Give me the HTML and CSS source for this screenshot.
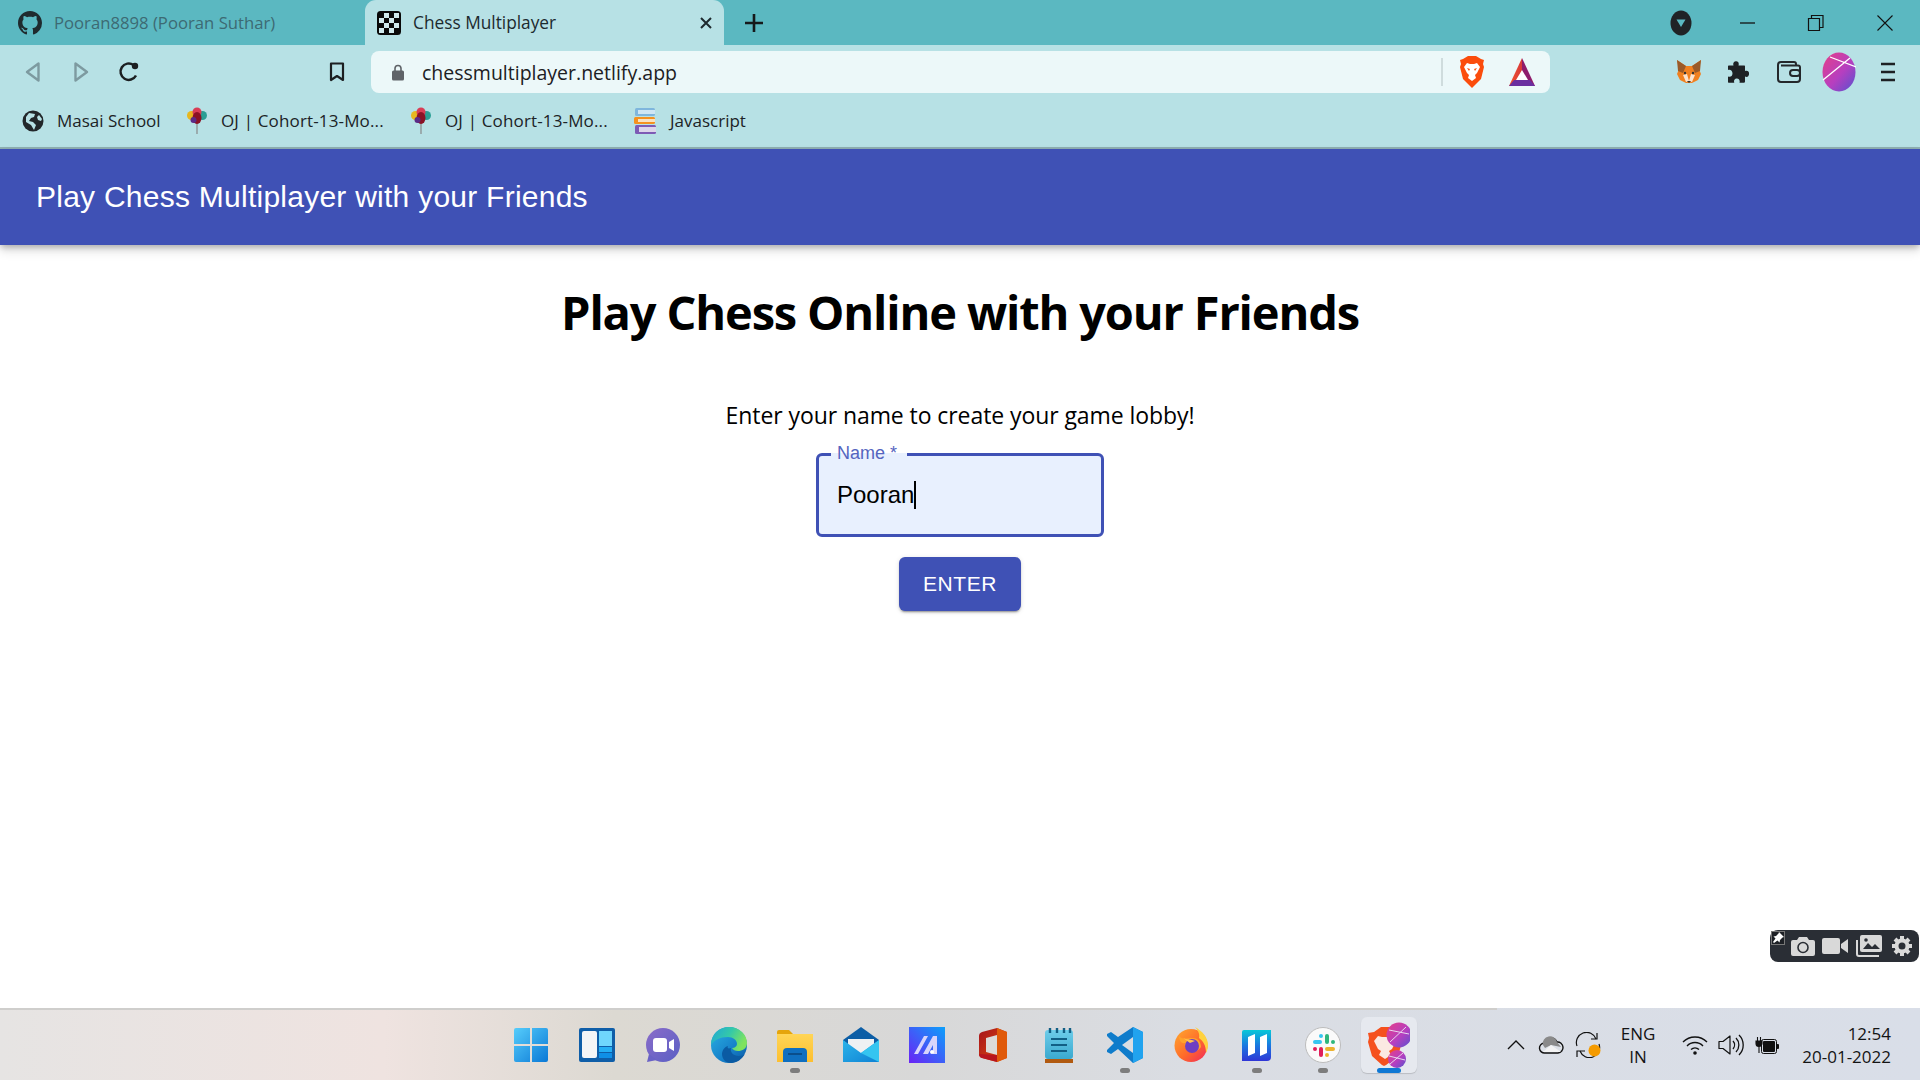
FILE: index.html
```html
<!DOCTYPE html>
<html lang="en">
<head>
<meta charset="utf-8">
<title>Chess Multiplayer</title>
<link rel="stylesheet" href="styles.css">
</head>
<body>
<svg class="defs" width="0" height="0" aria-hidden="true">
  <defs>
    <linearGradient id="gWin" x1="0" y1="0" x2="1" y2="1"><stop offset="0" stop-color="#56cdfb"/><stop offset="1" stop-color="#0a78d6"/></linearGradient>
    <linearGradient id="gEdge" x1="0" y1="0" x2="1" y2="1"><stop offset="0" stop-color="#2bb2e4"/><stop offset=".6" stop-color="#1680c9"/><stop offset="1" stop-color="#0c59a4"/></linearGradient>
    <linearGradient id="gEdgeTop" x1="0" y1="0" x2="1" y2=".4"><stop offset="0" stop-color="#1fa6d8"/><stop offset=".55" stop-color="#34c9a8"/><stop offset="1" stop-color="#7fe35f"/></linearGradient>
    <linearGradient id="gFolder" x1="0" y1="0" x2="0" y2="1"><stop offset="0" stop-color="#ffd556"/><stop offset="1" stop-color="#fdbf2f"/></linearGradient>
    <linearGradient id="gMail" x1="0" y1="0" x2="1" y2="1"><stop offset="0" stop-color="#2cb4ea"/><stop offset="1" stop-color="#0f82d4"/></linearGradient>
    <linearGradient id="gMark" x1="1" y1="0" x2="0" y2="1"><stop offset="0" stop-color="#0ca0fb"/><stop offset="1" stop-color="#6b22f5"/></linearGradient>
    <linearGradient id="gOffice" x1="0" y1="0" x2="1" y2="1"><stop offset="0" stop-color="#a5121c"/><stop offset="1" stop-color="#e2500c"/></linearGradient>
    <linearGradient id="gNote" x1="0" y1="0" x2="0" y2="1"><stop offset="0" stop-color="#6ecdea"/><stop offset="1" stop-color="#3aa9cf"/></linearGradient>
    <linearGradient id="gDove" x1="0" y1="0" x2="0" y2="1"><stop offset="0" stop-color="#08c8d8"/><stop offset=".5" stop-color="#1a78e0"/><stop offset="1" stop-color="#2f36d6"/></linearGradient>
    <linearGradient id="gFire" x1="0" y1="0" x2="1" y2="1"><stop offset="0" stop-color="#ffa92f"/><stop offset=".55" stop-color="#ff6a2a"/><stop offset="1" stop-color="#f0255f"/></linearGradient>
    <linearGradient id="gAvatar" x1="0" y1="0" x2="1" y2="1"><stop offset="0" stop-color="#e63f87"/><stop offset=".55" stop-color="#b63fc0"/><stop offset="1" stop-color="#5552cf"/></linearGradient>
    <linearGradient id="gBat" x1="0" y1="0" x2="1" y2="0"><stop offset="0" stop-color="#f2532c"/><stop offset="1" stop-color="#d73a3a"/></linearGradient>
    <linearGradient id="gChat" x1="0" y1="0" x2="1" y2="1"><stop offset="0" stop-color="#8a6cc9"/><stop offset="1" stop-color="#5a5fc4"/></linearGradient>
  </defs>
</svg>

<div class="tabstrip">
  <div class="tab tab-inactive">
    <svg class="tab-fav" width="24" height="24" viewBox="0 0 16 16"><path fill="#1f2a2e" d="M8 0C3.58 0 0 3.58 0 8c0 3.54 2.29 6.53 5.47 7.59.4.07.55-.17.55-.38 0-.19-.01-.82-.01-1.49-2.01.37-2.53-.49-2.69-.94-.09-.23-.48-.94-.82-1.13-.28-.15-.68-.52-.01-.53.63-.01 1.08.58 1.23.82.72 1.21 1.87.87 2.33.66.07-.52.28-.87.51-1.07-1.78-.2-3.64-.89-3.64-3.95 0-.87.31-1.59.82-2.15-.08-.2-.36-1.02.08-2.12 0 0 .67-.21 2.2.82.64-.18 1.32-.27 2-.27.68 0 1.36.09 2 .27 1.53-1.04 2.2-.82 2.2-.82.44 1.1.16 1.92.08 2.12.51.56.82 1.27.82 2.15 0 3.07-1.87 3.75-3.65 3.95.29.25.54.73.54 1.48 0 1.07-.01 1.93-.01 2.2 0 .21.15.46.55.38A8.013 8.013 0 0016 8c0-4.42-3.58-8-8-8z"/></svg>
    <span class="tab-title">Pooran8898 (Pooran Suthar)</span>
  </div>
  <div class="tab tab-active">
    <svg class="tab-fav" width="24" height="24" viewBox="0 0 24 24"><rect width="24" height="24" rx="3.500" fill="#0a0a0a"/><g fill="#d0e9ec"><rect x="7" y="2" width="5" height="5"/><rect x="17" y="2" width="5" height="5"/><rect x="2" y="7" width="5" height="5"/><rect x="12" y="7" width="5" height="5"/><rect x="7" y="12" width="5" height="5"/><rect x="17" y="12" width="5" height="5"/><rect x="2" y="17" width="5" height="5"/><rect x="12" y="17" width="5" height="5"/></g></svg>
    <span class="tab-title">Chess Multiplayer</span>
    <svg class="tab-close" width="14" height="14" viewBox="0 0 14 14"><path d="M2 2l10 10M12 2L2 12" stroke="#1e2a2e" stroke-width="2" fill="none"/></svg>
  </div>
  <svg class="new-tab" width="20" height="20" viewBox="0 0 20 20"><path d="M10 1v18M1 10h18" stroke="#15191b" stroke-width="2.600"/></svg>
  <div class="window-controls">
    <svg width="22" height="26" viewBox="0 0 22 26"><ellipse cx="11" cy="13" rx="10.500" ry="12.500" fill="#202326"/><path d="M6.500 9.500h9L11 17z" fill="#5bb8c1"/></svg>
    <svg width="18" height="18" viewBox="0 0 18 18"><path d="M1 9h15" stroke="#111" stroke-width="1.300"/></svg>
    <svg width="18" height="20" viewBox="0 0 18 20"><path d="M1.500 5.500h11v12h-11z M4.500 5V2.500h11.500v12h-3.500" fill="none" stroke="#111" stroke-width="1.200"/></svg>
    <svg width="18" height="18" viewBox="0 0 18 18"><path d="M1.500 1.500l15 15M16.500 1.500l-15 15" stroke="#111" stroke-width="1.100"/></svg>
  </div>
</div>

<div class="toolbar">
  <div class="nav-group">
    <svg width="18" height="22" viewBox="0 0 18 22"><path d="M14.500 2.500v17L3 11z" fill="none" stroke="#7d9aa0" stroke-width="2.400" stroke-linejoin="round"/></svg>
    <svg width="18" height="22" viewBox="0 0 18 22"><path d="M3.500 2.500v17L15 11z" fill="none" stroke="#7d9aa0" stroke-width="2.400" stroke-linejoin="round"/></svg>
    <svg width="22" height="22" viewBox="0 0 22 22"><path d="M18 14.500A8.200 8.200 0 1 1 15.500 4" fill="none" stroke="#1c1f21" stroke-width="2.500"/><circle cx="17" cy="5" r="3.200" fill="#1c1f21"/></svg>
  </div>
  <svg class="bookmark-btn" width="16" height="20" viewBox="0 0 16 20"><path d="M2 1.500h12v16.500l-6-4-6 4z" fill="none" stroke="#1c1f21" stroke-width="2.200" stroke-linejoin="round"/></svg>
  <div class="omnibox">
    <svg class="lock" width="14" height="17" viewBox="0 0 14 17"><path d="M4 7V4.500a3 3 0 0 1 6 0V7" fill="none" stroke="#5f6368" stroke-width="1.600"/><rect x="1" y="6.500" width="12" height="10" rx="1.500" fill="#5f6368"/></svg>
    <span class="url">chessmultiplayer.netlify.app</span>
    <span class="omni-sep"></span>
    <svg class="brave-shield" width="26" height="34" viewBox="0 0 26 34"><path d="M4 4l5-3h8l5 3 3 1-1 4 1 3-3 12-8 8-1 1-1-1-8-8L1 12l1-3-1-4z" fill="#fb4c0c"/><path d="M8 8l3 1h4l3-1 3 4-3 6-2 2 1 3-4 3-4-3 1-3-2-2-3-6z" fill="#fff"/><path d="M8 13l3 1-1 2zM18 13l-3 1 1 2z" fill="#fb4c0c"/></svg>
    <svg class="bat" width="28" height="30" viewBox="0 0 28 30"><path d="M14 1L1 29h13z" fill="url(#gBat)"/><path d="M14 1L27 29H14z" fill="#8f1c6b"/><path d="M1 29l5-6h16l5 6z" fill="#6a2fa0"/><path d="M14 13l6 10H8z" fill="#fff"/></svg>
  </div>
  <div class="extensions">
    <svg width="26" height="26" viewBox="0 0 26 26"><path d="M1 1l9 6h6l9-6-2 9 2 5-3 6-6 3h-6l-6-3-3-6 2-5z" fill="#f0801f"/><path d="M1 1l9 6-3 7-5-2zM25 1l-9 6 3 7 5-2z" fill="#9a5a28"/><path d="M7 16l4-1 2 7-3 1zM19 16l-4-1-2 7 3 1z" fill="#fbe3cf"/><path d="M11 22h4l-2 2z" fill="#333"/><circle cx="9" cy="14" r="1.200" fill="#333"/><circle cx="17" cy="14" r="1.200" fill="#333"/></svg>
    <svg width="22" height="24" viewBox="0 0 22 24"><path d="M8 1.500c2.500-1 4.500 1 3.500 4H17c.8 0 1 .4 1 1V11c3-1 4.500 1 4 3.500-.5 2.500-2.500 3-4 2v5c0 .8-.4 1.200-1 1.200h-4.500c.8-3-1-4.500-3-4.200-2 .3-3 2-2.200 4.200H2c-.8 0-1-.5-1-1v-5.200c2.500 1 4.500-.5 4.500-3S3.500 9 1 10V6.500c0-.8.4-1 1-1h4.500C5.800 3.500 6.500 2 8 1.500z" fill="#1e2124"/></svg>
    <svg width="24" height="22" viewBox="0 0 24 22"><path d="M19 4.500V3a2 2 0 0 0-2-2H4a3 3 0 0 0-3 3v14a3 3 0 0 0 3 3h16a3 3 0 0 0 3-3V6.500a2 2 0 0 0-2-2H4" fill="none" stroke="#24282b" stroke-width="2"/><rect x="13" y="9" width="10" height="6" rx="3" fill="#b7e1e5" stroke="#24282b" stroke-width="2"/></svg>
    <svg width="34" height="40" viewBox="0 0 34 40"><ellipse cx="17" cy="20" rx="16.500" ry="19.500" fill="url(#gAvatar)"/><path d="M8 5l26 10M1 28L28 6" stroke="#fff" stroke-width="1.300" fill="none"/></svg>
    <svg width="14" height="24" viewBox="0 0 14 24"><path d="M0 4h14M0 12h14M0 20h14" stroke="#1e2124" stroke-width="2.400"/></svg>
  </div>
</div>

<div class="bookmarks">
  <div class="bm bm-masai">
    <svg width="22" height="22" viewBox="0 0 22 22"><circle cx="11" cy="11" r="10.500" fill="#22272a"/><path d="M7 3l6 1-1 3-3 1-2 3 4 1 3 3-2 5-3-5-5-3V7zM17 5l3 4-1 2-3-1-1-3z" fill="#b7e1e5"/></svg>
    <span>Masai School</span>
  </div>
  <div class="bm bm-oj">
    <svg width="22" height="28" viewBox="0 0 22 28"><path d="M11 14v13" stroke="#888" stroke-width="1.200"/><circle cx="5.500" cy="8.500" r="4.500" fill="#e7b71f"/><circle cx="16.500" cy="8.500" r="4.500" fill="#2a9e94"/><circle cx="11" cy="5" r="4.500" fill="#d93d55"/><ellipse cx="11" cy="11" rx="4.500" ry="6" fill="#8a1225"/><circle cx="7.500" cy="13" r="3" fill="#5b2a86"/></svg>
    <span>OJ | Cohort-13-Mo...</span>
  </div>
  <div class="bm bm-oj">
    <svg width="22" height="28" viewBox="0 0 22 28"><path d="M11 14v13" stroke="#888" stroke-width="1.200"/><circle cx="5.500" cy="8.500" r="4.500" fill="#e7b71f"/><circle cx="16.500" cy="8.500" r="4.500" fill="#2a9e94"/><circle cx="11" cy="5" r="4.500" fill="#d93d55"/><ellipse cx="11" cy="11" rx="4.500" ry="6" fill="#8a1225"/><circle cx="7.500" cy="13" r="3" fill="#5b2a86"/></svg>
    <span>OJ | Cohort-13-Mo...</span>
  </div>
  <div class="bm bm-js">
    <svg width="24" height="28" viewBox="0 0 24 28"><rect x="2" y="1" width="20" height="8" rx="1.500" fill="#7fb6dd"/><rect x="5" y="3" width="17" height="4" fill="#cfe6f4"/><rect x="1" y="10" width="21" height="7" rx="1.500" fill="#f5911e"/><rect x="5" y="12" width="17" height="3" fill="#f9e2c2"/><rect x="2" y="18" width="21" height="9" rx="1.500" fill="#7d5bb5"/><rect x="6" y="20" width="17" height="5" fill="#dcd6ea"/></svg>
    <span>Javascript</span>
  </div>
</div>

<header class="appbar">
  <span class="appbar-title">Play Chess Multiplayer with your Friends</span>
</header>

<main class="page">
  <h1 class="headline">Play Chess Online with your Friends</h1>
  <p class="prompt">Enter your name to create your game lobby!</p>
  <div class="field">
    <span class="field-label">Name *</span>
    <span class="field-value">Pooran</span><span class="caret"></span>
  </div>
  <button class="enter" type="button">ENTER</button>

  <div class="capture">
    <div class="capture-pin"><svg width="12" height="12" viewBox="0 0 12 12"><path d="M7 0l5 5-1.500 .5-2.500 2.500-.5 2.500-2-2L2 11 1 10l2.500-3.500-2-2L4 4l2.500-2.500z" fill="#fff"/></svg></div>
    <svg width="24" height="20" viewBox="0 0 24 20"><path d="M8 1h8l2 3h4a2 2 0 0 1 2 2v12a2 2 0 0 1-2 2H2a2 2 0 0 1-2-2V6a2 2 0 0 1 2-2h4z" fill="#d9d9d9"/><circle cx="12" cy="11.500" r="5" fill="#d9d9d9" stroke="#2a2e35" stroke-width="1.600"/></svg>
    <svg width="26" height="18" viewBox="0 0 26 18"><rect y="1" width="18" height="16" rx="2" fill="#d9d9d9"/><path d="M19 7l7-5v14l-7-5z" fill="#d9d9d9"/></svg>
    <svg width="26" height="22" viewBox="0 0 26 22"><rect x="4" y="0" width="22" height="17" rx="2" fill="#d9d9d9"/><path d="M7 14l5-6 4 4 3-3 5 5z" fill="#2a2e35"/><circle cx="10" cy="5" r="1.800" fill="#2a2e35"/><path d="M1 5v14a2 2 0 0 0 2 2h20" fill="none" stroke="#d9d9d9" stroke-width="2"/></svg>
    <svg width="22" height="22" viewBox="0 0 22 22"><circle cx="11" cy="11" r="5.500" fill="none" stroke="#d9d9d9" stroke-width="4"/><path d="M11 1v4M11 17v4M1 11h4M17 11h4M4 4l3 3M15 15l3 3M18 4l-3 3M7 15l-3 3" stroke="#d9d9d9" stroke-width="4"/></svg>
  </div>
</main>

<footer class="taskbar">
  <span class="taskbar-spacer"></span>
  <div class="task-icons">
    <div class="task"><svg width="36" height="36" viewBox="0 0 36 36"><g fill="url(#gWin)"><path d="M1 3a2 2 0 0 1 2-2h14v16H1zM19 1h14a2 2 0 0 1 2 2v14H19zM1 19h16v16H3a2 2 0 0 1-2-2zM19 19h16v14a2 2 0 0 1-2 2H19z"/></g></svg></div>
    <div class="task"><svg width="36" height="36" viewBox="0 0 36 36"><rect y="1" width="36" height="34" rx="2" fill="#0f5ea8"/><rect x="3" y="4" width="15" height="27" rx="2" fill="#f4f5f6"/><rect x="20" y="4" width="13" height="15" fill="#6fd6fd"/><rect x="20" y="20" width="13" height="5" fill="#24aef4"/><rect x="20" y="26" width="13" height="5" fill="#0f8fe6"/></svg></div>
    <div class="task"><svg width="36" height="36" viewBox="0 0 36 36"><circle cx="18" cy="18" r="17" fill="url(#gChat)"/><path d="M4 27l-2 8 10-2z" fill="#6a62c6"/><rect x="8" y="11" width="14" height="14" rx="3" fill="#fff"/><path d="M24 15l5-3v12l-5-3z" fill="#fff"/></svg></div>
    <div class="task"><svg width="36" height="36" viewBox="0 0 36 36"><circle cx="18" cy="18" r="18" fill="url(#gEdge)"/><path d="M0 18C0 6 9 0 18 0c10 0 18 7 18 16 0 6-5 8-9 8-3 0-5-1-6-3 3 0 5-2 5-4 0-4-4-7-9-7C9 10 3 13 0 18z" fill="url(#gEdgeTop)"/><path d="M20 21c-1 4 2 8 8 8 3 0 5-1 6-2-3 5-8 9-14 9-5 0-9-4-9-9 0-3 2-7 6-8-1 2 0 3 3 2z" fill="#0b5ba3"/></svg></div>
    <div class="task"><svg width="36" height="36" viewBox="0 0 36 36"><path d="M0 5a2 2 0 0 1 2-2h10l4 4h18a2 2 0 0 1 2 2v4H0z" fill="#e5a50c"/><path d="M0 7h36v28H0z" fill="url(#gFolder)"/><path d="M6 35V25a4 4 0 0 1 4-4h16a4 4 0 0 1 4 4v10z" fill="#0f6fc0"/><rect x="11" y="26" width="14" height="2" fill="#0a4e8c"/></svg><span class="run-dot"></span></div>
    <div class="task"><svg width="36" height="36" viewBox="0 0 36 36"><path d="M0 13L18 0l18 13v22H0z" fill="#0c5ea6"/><path d="M5 12h26v10l-13 9L5 22z" fill="#eef1f3"/><path d="M0 13l18 13 18-13v22H0z" fill="url(#gMail)"/><path d="M36 13v22L18 26z" fill="#35c5f0"/></svg></div>
    <div class="task"><svg width="36" height="36" viewBox="0 0 36 36"><rect width="36" height="36" fill="url(#gMark)"/><path d="M5 27L15 9h4L9 27zM14 27L24 9h4v18h-4v-9l-5 9z" fill="#d8d4fb"/><circle cx="23" cy="25" r="2" fill="#fff"/></svg></div>
    <div class="task"><svg width="36" height="36" viewBox="0 0 36 36"><path d="M4 9Q4 6 7 5L22 1l10 4v26l-10 4L7 31q-3-1-3-4z" fill="url(#gOffice)"/><path d="M22 8l-11 3v14l11 3z" fill="#dcdbd9"/><path d="M22 1l10 4v26l-10 4z" fill="#e05a0a"/><path d="M4 27q0 3 3 4l15 4v-7z" fill="#b8161f"/></svg></div>
    <div class="task"><svg width="36" height="36" viewBox="0 0 36 36"><rect x="4" y="32" width="28" height="4" fill="#b15a10"/><rect x="4" y="3" width="28" height="29" rx="3" fill="url(#gNote)"/><path d="M9 1v5M16 1v5M23 1v5M29 1v5" stroke="#125f85" stroke-width="2.400"/><path d="M10 12h16M10 18h16M10 24h16" stroke="#125f85" stroke-width="1.800"/></svg></div>
    <div class="task"><svg width="36" height="36" viewBox="0 0 36 36"><path d="M26 0l10 5v26l-10 5-15-14-7 5-4-2v-2l7-7-7-7v-2l4-2 7 5z" fill="#0f7ccb"/><path d="M26 0l10 5v26l-10 5z" fill="#21a3ef"/><path d="M26 10L15 18l11 8z" fill="#dadde2"/></svg><span class="run-dot"></span></div>
    <div class="task"><svg width="36" height="36" viewBox="0 0 36 36"><circle cx="18" cy="18.500" r="16.500" fill="url(#gFire)"/><path d="M22 0c7 4 13 10 13 18 0 3-1 6-2 8 0-8-3-12-7-15 1-4-1-8-4-11z" fill="#ffd23f"/><path d="M6 9c3 4 9 2 13 2 7 0 9 5 9 9-3 5-9 6-13 3-3-2-4-5-3-7-4 1-6-3-6-7z" fill="#ffa32b"/><circle cx="19" cy="19" r="7" fill="#6d3ec2"/><path d="M10 11c3 2 8 1 12 3l-5 2z" fill="#ffc14d"/></svg></div>
    <div class="task"><svg width="36" height="36" viewBox="0 0 36 36"><path d="M5 3h27v27a4 4 0 0 1-4 4H3V5a2 2 0 0 1 2-2z" fill="url(#gDove)"/><path d="M9 10l7-3v19l-7 3zM21 10l7-3v19l-7 3z" fill="#fff"/></svg><span class="run-dot"></span></div>
    <div class="task"><svg width="36" height="36" viewBox="0 0 36 36"><circle cx="18" cy="18" r="17.500" fill="#fafafa" stroke="#bcbcbc"/><rect x="8" y="13" width="9" height="4" rx="2" fill="#36c5f0"/><rect x="14" y="7" width="4" height="4" rx="2" fill="#36c5f0"/><rect x="20" y="7" width="4" height="10" rx="2" fill="#2eb67d"/><rect x="26" y="13" width="4" height="4" rx="2" fill="#2eb67d"/><rect x="20" y="20" width="10" height="4" rx="2" fill="#ecb22e"/><rect x="20" y="26" width="4" height="4" rx="2" fill="#ecb22e"/><rect x="14" y="20" width="4" height="10" rx="2" fill="#e01e5a"/><rect x="8" y="20" width="4" height="4" rx="2" fill="#e01e5a"/></svg><span class="run-dot"></span></div>
    <div class="task task-current"><svg width="42" height="46" viewBox="0 0 42 46"><path d="M6 10l7-5h10l7 5 4 1-1 5 1 4-4 14-12 9-2 1-2-1-10-9L0 20l1-4-1-5z" fill="#f5511e"/><path d="M10 14l4 1h6l4-1 4 5-4 8-3 2 2 4-6 4-6-4 2-4-3-2-4-8z" fill="#fbe9e2"/><circle cx="31" cy="13" r="12.500" fill="url(#gAvatar)"/><path d="M21 8l20 4M22 20L38 5" stroke="#e9d5ee" stroke-width="1"/><circle cx="29" cy="37" r="9" fill="url(#gAvatar)"/><path d="M21 34l16 4M22 42l13-11" stroke="#e9d5ee" stroke-width="1"/></svg><span class="run-bar"></span></div>
  </div>
  <div class="tray">
    <svg class="t-chevron" width="18" height="10" viewBox="0 0 18 10"><path d="M1 9l8-8 8 8" fill="none" stroke="#111" stroke-width="1.300"/></svg>
    <svg class="t-cloud" width="26" height="18" viewBox="0 0 26 18"><path d="M7 17a5 5 0 0 1-1-10 7 7 0 0 1 13-1 5.500 5.500 0 0 1 1 11z" fill="#dde1e8" stroke="#111" stroke-width="1.400"/><path d="M5 9a7 7 0 0 1 14-3l4 5-10-2-6 3z" fill="#8a8a8a"/><path d="M5 16l8-7 10 7z" fill="#f3f3f3"/></svg>
    <svg class="t-sync" width="26" height="26" viewBox="0 0 26 26"><path d="M2 14A10 10 0 0 1 21 7M24 12a10 10 0 0 1-19 7" fill="none" stroke="#111" stroke-width="1.200"/><path d="M16 7h6V1M10 19H2v6" fill="none" stroke="#111" stroke-width="1.200"/><circle cx="19.500" cy="18.500" r="6" fill="#f59b00"/></svg>
    <div class="t-lang"><span>ENG</span><span>IN</span></div>
    <svg class="t-wifi" width="26" height="20" viewBox="0 0 26 20"><path d="M1 7a17 17 0 0 1 24 0M5 11a11 11 0 0 1 16 0M9 14.500a6 6 0 0 1 8 0" fill="none" stroke="#111" stroke-width="1.400"/><circle cx="13" cy="18" r="1.800" fill="#111"/></svg>
    <svg class="t-speaker" width="26" height="22" viewBox="0 0 26 22"><path d="M1 7.500h4L12 2v18l-7-5.500H1z" fill="none" stroke="#111" stroke-width="1.200" stroke-linejoin="round"/><path d="M15 7a6 6 0 0 1 0 8M18 4a10 10 0 0 1 0 14M21 1a14 14 0 0 1 0 20" fill="none" stroke="#111" stroke-width="1.300"/></svg>
    <svg class="t-battery" width="24" height="20" viewBox="0 0 24 20"><rect x="8" y="6" width="12" height="11" rx="1" fill="#111"/><rect x="6.500" y="4.500" width="15" height="14" rx="2" fill="none" stroke="#111" stroke-width="1"/><rect x="21.500" y="9" width="2.500" height="5" rx="1" fill="#111"/><path d="M1 6h6v2.500a3 3 0 0 1-6 0zM2.500 2v4M5.500 2v4M4 11v7" stroke="#111" stroke-width="1.100" fill="#111"/></svg>
    <div class="t-clock"><span>12:54</span><span>20-01-2022</span></div>
  </div>
</footer>
</body>
</html>
```

FILE: styles.css
```css
* { box-sizing: border-box; }
html, body { margin: 0; padding: 0; }
body {
  width: 1920px;
  height: 1080px;
  overflow: hidden;
  display: flex;
  flex-direction: column;
  background: #fff;
  font-family: "Open Sans", "Noto Sans", sans-serif;
}
svg { display: block; flex: none; }
.defs { position: absolute; }

/* tab strip */
.tabstrip {
  height: 45px;
  flex: none;
  display: flex;
  align-items: center;
  background: #5bb8c1;
}
.tab {
  height: 45px;
  display: flex;
  align-items: center;
  font-size: 16.700px;
}
.tab-inactive { width: 365px; padding-left: 18px; color: #3d6a73; }
.tab-active {
  width: 359px;
  padding: 0 11px 0 12px;
  background: #b7e1e5;
  border-radius: 11px 11px 0 0;
  color: #1c2a2e;
  font-size: 17.300px;
  font-weight: 500;
}
.tab-inactive .tab-title { margin-left: 12px; }
.tab-title { margin-left: 12px; white-space: nowrap; }
.tab-close { margin-left: auto; }
.new-tab { margin-left: 20px; }
.window-controls {
  margin-left: auto;
  display: grid;
  grid-template-columns: 68px 66px 70px 68px;
  justify-items: center;
  align-items: center;
  padding-right: 1px;
}

/* toolbar */
.toolbar {
  height: 56px;
  flex: none;
  display: flex;
  align-items: center;
  padding-bottom: 2px;
  background: #b7e1e5;
}
.nav-group {
  display: grid;
  grid-template-columns: 48px 48px 48px;
  justify-items: center;
  align-items: center;
  margin-left: 9px;
}
.bookmark-btn { margin-left: 176px; }
.omnibox {
  width: 1179px;
  height: 42px;
  margin-left: 26px;
  display: flex;
  align-items: center;
  background: #ecf8f9;
  border-radius: 8px;
  padding-left: 20px;
}
.url { margin-left: 17px; font-size: 19.500px; color: #1c2023; white-space: nowrap; }
.lock { flex: none; }
.omni-sep { margin-left: auto; width: 2px; height: 28px; background: #cfdcdd; }
.brave-shield { margin-left: 16px; }
.bat { margin-left: 23px; margin-right: 14px; }
.extensions {
  display: grid;
  grid-template-columns: 48px 50px 51px 50px 48px;
  justify-items: center;
  align-items: center;
  margin-left: 115px;
}

/* bookmarks */
.bookmarks {
  height: 48px;
  flex: none;
  display: flex;
  align-items: center;
  background: #b7e1e5;
  border-bottom: 2px solid #8fb0b3;
  padding: 0 0 7px 22px;
  color: #1c2326;
  font-size: 17px;
}
.bm { display: flex; align-items: center; gap: 13px; white-space: nowrap; }
.bm-masai { width: 164px; }
.bm-oj { width: 224px; }
.bm-oj span { letter-spacing: .15px; }
.bm-js { width: 120px; margin-left: -1px; }

/* app bar */
.appbar {
  height: 96px;
  flex: none;
  display: flex;
  align-items: center;
  padding-left: 36px;
  background: #3f51b5;
  color: #fff;
  font-family: "Liberation Sans", Arial, sans-serif;
  font-size: 30px;
  letter-spacing: .25px;
  position: relative;
  z-index: 1;
  box-shadow: 0 3px 6px -1px rgba(0,0,0,.25), 0 6px 10px 0 rgba(0,0,0,.12);
}

/* main */
.page {
  flex: 1;
  position: relative;
  display: flex;
  flex-direction: column;
  align-items: center;
  color: #000;
}
.headline {
  margin: 35px 0 0;
  font-size: 47px;
  line-height: 64px;
  font-weight: 700;
  letter-spacing: -1.150px;
  white-space: nowrap;
}
.prompt {
  margin: 55px 0 0;
  font-size: 23px;
  line-height: 32px;
  letter-spacing: -.08px;
  white-space: nowrap;
}
.field {
  width: 288px;
  height: 84px;
  margin-top: 22px;
  position: relative;
  display: flex;
  align-items: center;
  padding-left: 18px;
  background: #e8f0fe;
  border: 3px solid #3f51b5;
  border-radius: 6px;
  font-family: "Liberation Sans", Arial, sans-serif;
  font-size: 24px;
}
.field-label {
  position: absolute;
  left: 12px;
  top: -12px;
  padding: 0 10px 0 6px;
  height: 15px;
  line-height: 18px;
  background: linear-gradient(to bottom, #fff 0, #fff 9px, #e8f0fe 9px);
  color: #5565bf;
  font-size: 18px;
  white-space: nowrap;
}
.caret { width: 2px; height: 28px; background: #000; }
.enter {
  width: 122px;
  height: 54px;
  margin-top: 20px;
  border: 0;
  border-radius: 6px;
  background: #3f51b5;
  color: #fff;
  font-family: "Liberation Sans", Arial, sans-serif;
  font-size: 21px;
  letter-spacing: .6px;
  box-shadow: 0 3px 1px -2px rgba(0,0,0,.2), 0 2px 2px 0 rgba(0,0,0,.14), 0 1px 5px 0 rgba(0,0,0,.12);
}
.capture {
  position: absolute;
  right: 1px;
  bottom: 46px;
  width: 149px;
  height: 32px;
  display: grid;
  grid-template-columns: 32px 32px 36px 30px;
  justify-items: center;
  align-items: center;
  padding-left: 17px;
  background: #2a2e35;
  border-radius: 8px;
}
.capture-pin {
  position: absolute;
  left: 1px;
  top: 1px;
  width: 14px;
  height: 14px;
  display: flex;
  align-items: center;
  justify-content: center;
  border: 1px solid #777;
  background: #1d2025;
}

/* taskbar */
.taskbar {
  height: 72px;
  flex: none;
  display: grid;
  grid-template-columns: 1fr auto 1fr;
  align-items: center;
  padding-top: 2px;
  background:
    linear-gradient(#cfcecc, #cfcecc) 0 0 / 1497px 2px no-repeat,
    linear-gradient(90deg, #e6e4e3 0, #efe3e0 20%, #dcd9d2 32%, #d8d8d8 48%, #dadde3 62%, #d9dee8 100%);
}
.task-icons { display: flex; align-items: center; }
.task {
  width: 66px;
  height: 70px;
  position: relative;
  display: flex;
  align-items: center;
  justify-content: center;
}
.task-current::before {
  content: "";
  position: absolute;
  left: 5px;
  top: 7px;
  width: 56px;
  height: 56px;
  background: #e6e9ef;
  border-radius: 6px;
  box-shadow: 0 1px 1px rgba(0,0,0,.15);
}
.task-current svg { position: relative; }
.run-dot, .run-bar {
  position: absolute;
  bottom: 7px;
  left: 50%;
  transform: translateX(-50%);
  height: 5px;
  border-radius: 3px;
}
.run-dot { width: 10px; background: #7d7d7d; }
.run-bar { width: 24px; background: #0f78d4; }
.tray {
  display: flex;
  align-items: center;
  justify-content: flex-end;
  height: 70px;
  padding-right: 29px;
  font-size: 17px;
  color: #141414;
}
.t-chevron { margin-right: 13px; }
.t-cloud { margin-right: 11px; }
.t-sync { margin-right: 20px; }
.t-lang { display: flex; flex-direction: column; align-items: center; line-height: 23px; margin-right: 27px; }
.t-wifi { margin-right: 10px; }
.t-speaker { margin-right: 11px; }
.t-battery { margin-right: 23px; }
.t-clock { display: flex; flex-direction: column; align-items: flex-end; line-height: 23px; }
```
